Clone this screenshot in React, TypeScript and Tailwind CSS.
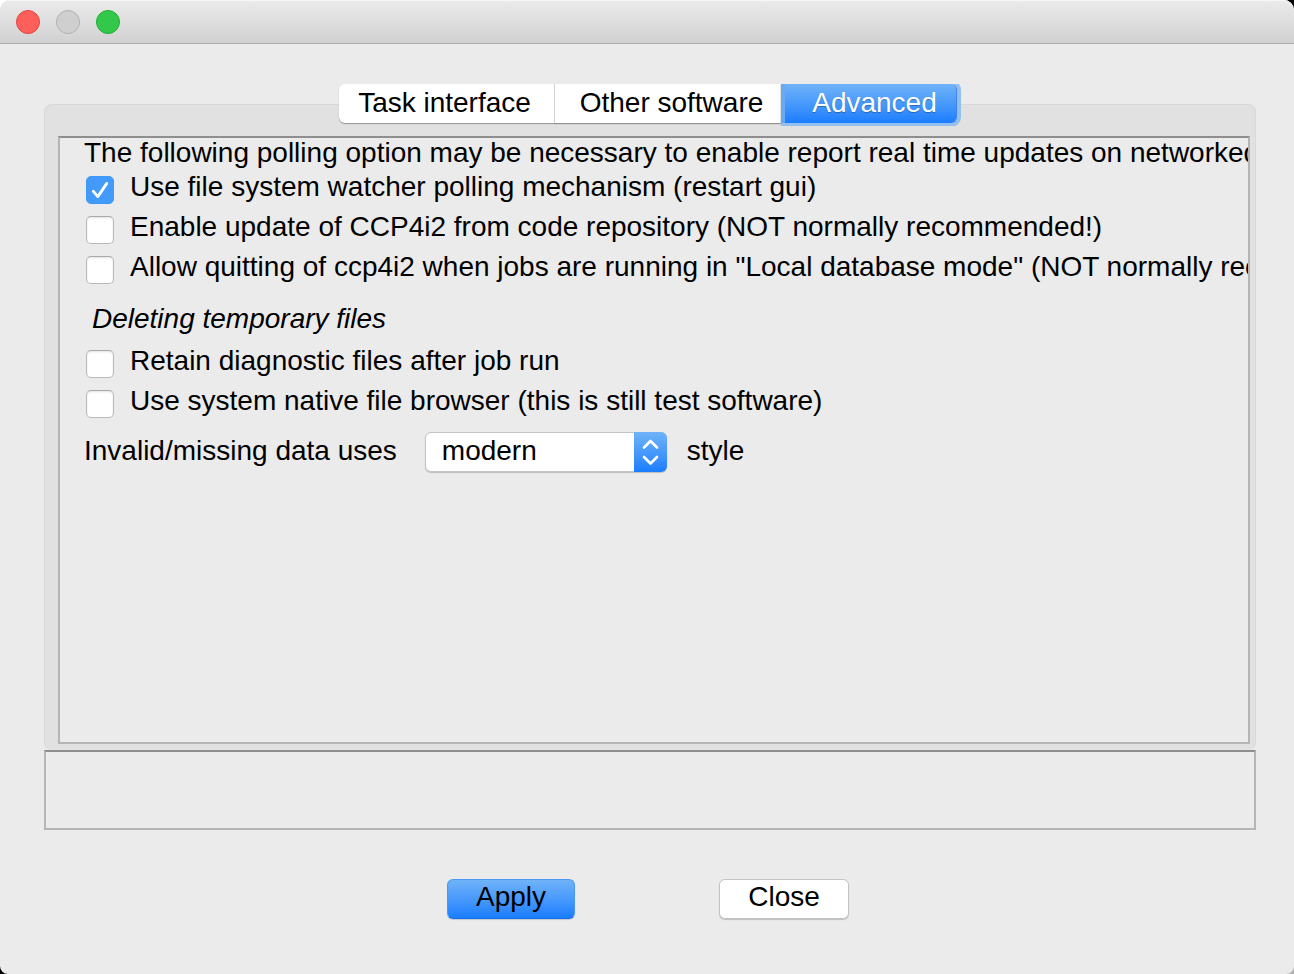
import { useState, type ReactNode } from "react";

const tabs = [
  { name: "Task interface", size: "w-[216px] pl-4 pr-5" },
  { name: "Other software", size: "w-[226px] pl-6 pr-4" },
  { name: "Advanced", size: "w-44 pl-6 pr-4" },
];

function CheckRow({ children, checked = false }: { children: ReactNode; checked?: boolean }) {
  return (
    <label className="flex h-10 items-start gap-4 pl-0.5">
      <span className="mt-1 grid shrink-0 place-items-center">
        <input
          type="checkbox"
          defaultChecked={checked}
          className="peer col-start-1 row-start-1 size-7 appearance-none rounded-[5px] border border-[#b9b9b9] border-t-[#a9a9a9] bg-white shadow-[inset_0_1px_2px_rgba(0,0,0,0.12)] checked:border-[#3f97f8] checked:bg-[#429bfa] checked:shadow-none"
        />
        <svg
          viewBox="0 0 28 28"
          className="pointer-events-none invisible col-start-1 row-start-1 size-7 peer-checked:visible"
          fill="none"
          stroke="white"
          strokeWidth="2.8"
          strokeLinecap="round"
          strokeLinejoin="round"
          aria-hidden="true"
        >
          <path d="M7.2 15.2 11.8 20.6 20.8 7.4" />
        </svg>
      </span>
      <span className="leading-[30px]">{children}</span>
    </label>
  );
}

export default function App() {
  const [active, setActive] = useState("Advanced");

  return (
    <div className="bg-[conic-gradient(#000_25%,#b0b0b0_25%_50%,#000_50%_75%,#fff_75%)]">
      <div className="flex min-h-screen flex-col overflow-hidden rounded-t-[10px] rounded-b-lg bg-[#ebebeb] font-['Liberation_Sans',Arial,sans-serif] text-[28px] leading-8 text-black">
        <header className="flex h-11 shrink-0 items-center gap-4 border-b border-[#acacac] bg-linear-to-b from-[#ebebeb] to-[#d1d1d1] px-4 shadow-[inset_0_1px_0_#f6f6f6]">
          <button aria-label="Close window" className="size-6 rounded-full border border-[#e2463f] bg-[#fd605b]" />
          <button aria-label="Minimize window" className="size-6 rounded-full border border-[#b1b1b1] bg-[#cfcfcf]" />
          <button aria-label="Zoom window" className="size-6 rounded-full border border-[#1fae33] bg-[#33c849]" />
        </header>

        <main className="flex grow flex-col pt-10 pr-[38px] pb-[55px] pl-11">
          <div role="tablist" className="z-10 flex h-[42px] items-start justify-center pr-1">
            {tabs.map(({ name, size }) => (
              <button
                key={name}
                role="tab"
                aria-selected={name === active}
                onClick={() => setActive(name)}
                className={`${size} h-[39px] border-r border-[#e0e0e0] bg-white pb-0.5 whitespace-nowrap shadow-[0_1px_1px_rgba(0,0,0,0.35)] first:rounded-l-md last:rounded-r-md aria-selected:z-10 aria-selected:border-r-[#3d86e8] aria-selected:border-l-4 aria-selected:border-l-[#6aa9f0] aria-selected:bg-linear-to-b aria-selected:from-[#6fb3f8] aria-selected:to-[#187dfe] aria-selected:text-white aria-selected:shadow-[0_0_0_4px_#93bff0] aria-selected:[clip-path:inset(0_-5px_-3px_0)] aria-selected:text-shadow-[0_1px_1px_rgba(0,0,0,0.3)]`}
              >
                {name}
              </button>
            ))}
          </div>

          <section className="-mt-[22px] flex grow flex-col rounded-lg border border-[#d8d8d8] border-b-[#e1e1e1] bg-[#e1e1e1] pt-[31px] pr-[5px] pb-[5px] pl-[13px]">
            <div
              role="tabpanel"
              className="w-0 min-w-full grow overflow-hidden border-2 border-[#b5b5b5] border-t-[#8e8e8e] bg-[#ebebeb] pl-6 whitespace-nowrap"
            >
              <p className="h-[34px] leading-[30px]">
                The following polling option may be necessary to enable report real time updates on networked disks
              </p>
              <CheckRow checked>Use file system watcher polling mechanism (restart gui)</CheckRow>
              <CheckRow>Enable update of CCP4i2 from code repository (NOT normally recommended!)</CheckRow>
              <CheckRow>
                Allow quitting of ccp4i2 when jobs are running in "Local database mode" (NOT normally recommended!)
              </CheckRow>
              <h2 className="mt-3 mb-3 pl-2 leading-[30px] italic">Deleting temporary files</h2>
              <CheckRow>Retain diagnostic files after job run</CheckRow>
              <CheckRow>Use system native file browser (this is still test software)</CheckRow>
              <div className="mt-1.5 flex items-center">
                <label htmlFor="style" className="pb-0.5">
                  Invalid/missing data uses
                </label>
                <span className="ml-7 grid w-[242px] grid-cols-[1fr_33px]">
                  <select
                    id="style"
                    className="col-span-2 col-start-1 row-start-1 h-10 appearance-none rounded-md border border-[#c4c4c4] bg-white pr-10 pb-0.5 pl-4 shadow-[0_1px_1px_rgba(0,0,0,0.2)]"
                  >
                    <option>modern</option>
                  </select>
                  <svg
                    viewBox="0 0 33 40"
                    className="pointer-events-none col-start-2 row-start-1 h-10 w-[33px] rounded-r-md bg-linear-to-b from-[#6fb3f8] to-[#187dfe]"
                    fill="none"
                    stroke="white"
                    strokeWidth="2.6"
                    strokeLinecap="round"
                    strokeLinejoin="round"
                    aria-hidden="true"
                  >
                    <path d="M10 15.5 16.5 9 23 15.5M10 25 16.5 31.5 23 25" />
                  </svg>
                </span>
                <span className="ml-5 pb-0.5">style</span>
              </div>
            </div>
          </section>

          <div role="status" className="h-20 border-2 border-[#b5b5b5] border-t-[#8e8e8e]" />

          <div className="mt-[49px] flex justify-center gap-36 pr-1">
            <button className="h-10 w-32 rounded-md border border-[#4a9af5] border-b-[#1470f5] bg-linear-to-b from-[#6fb3f8] to-[#187dfe] pb-1 shadow-[0_1px_1px_rgba(0,0,0,0.15)]">
              Apply
            </button>
            <button className="h-10 w-[130px] rounded-md border border-[#c4c4c4] bg-white pb-1 shadow-[0_1px_1px_rgba(0,0,0,0.2)]">
              Close
            </button>
          </div>
        </main>
      </div>
    </div>
  );
}
